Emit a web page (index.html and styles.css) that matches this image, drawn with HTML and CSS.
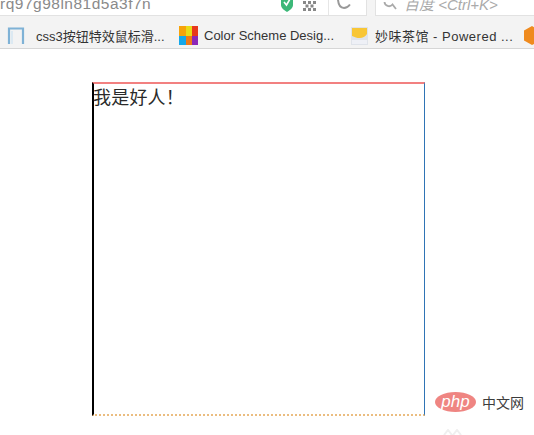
FILE: index.html
```html
<!DOCTYPE html>
<html lang="zh">
<head>
<meta charset="utf-8">
<title>border demo</title>
<link rel="stylesheet" href="styles.css">
</head>
<body>
<header class="toolbar">
  <div class="urlbar">
    <span class="url">rq97g98ln81d5a3f7n</span>
    <svg class="shield" width="14" height="15" viewBox="0 0 14 15"><path d="M1 0h12v7c0 3-3 5-6 7C4 12 1 10 1 7z" fill="#3cb878"/><path d="M4 4l2.500 3L10 1" fill="none" stroke="#fff" stroke-width="1.600"/></svg>
    <svg class="qr" width="14" height="10" viewBox="0 0 14 10"><path d="M0 0h3v3H0zM5 0h3v3H5zM10 0h3v3h-3zM2.500 3.500h3v3h-3zM7.500 3.500h3v3h-3zM0 7h3v3H0zM5 7h3v3H5zM10 7h3v3h-3z" fill="#888"/></svg>
    <span class="sep"></span>
    <svg class="reload" width="15" height="9" viewBox="0 0 15 9"><path d="M14 4.500C12 7 10 8 8 8 5 8 2.500 5 2 0" fill="none" stroke="#999" stroke-width="2"/></svg>
  </div>
  <div class="searchbar">
    <svg class="lens" width="14" height="8" viewBox="0 0 14 8"><path d="M1.500 0a4.500 4.500 0 0 0 8 2.500L13 7" fill="none" stroke="#aaa" stroke-width="1.800"/></svg>
    <span class="hint">百度 &lt;Ctrl+K&gt;</span>
  </div>
</header>
<nav class="bookmarks">
  <a class="mark mark-css">
    <svg width="18" height="17" viewBox="0 0 18 17"><path d="M2 17V1.500h14V17" fill="none" stroke="#7fb2d6" stroke-width="2.200"/><path d="M5 17V4" stroke="#d5e6f2" stroke-width="1.500"/></svg>
    <span>css3按钮特效鼠标滑...</span>
  </a>
  <a class="mark mark-color">
    <svg width="19" height="19" viewBox="0 0 19 19"><rect width="7" height="10" fill="#f7a30a"/><rect x="7" width="6" height="10" fill="#e8dc18"/><rect x="13" width="6" height="10" fill="#e8381c"/><rect y="10" width="7" height="9" fill="#16a8ea"/><rect x="7" y="10" width="6" height="9" fill="#f07a18"/><rect x="13" y="10" width="6" height="9" fill="#8c28b8"/></svg>
    <span>Color Scheme Desig...</span>
  </a>
  <a class="mark mark-tea">
    <svg width="17" height="18" viewBox="0 0 17 18"><rect width="17" height="18" fill="#dfe3ea"/><path d="M1 1h15v6c-3 5-9 5-15 2z" fill="#f8c636"/><path d="M1 13h15v4H1z" fill="#eef0f6"/></svg>
    <span>妙味茶馆 - Powered ...</span>
  </a>
  <svg class="hex" width="16" height="19" viewBox="0 0 16 19"><path d="M8 0l8 4.500v10L8 19l-8-4.500v-10z" fill="#ef8a1e"/></svg>
</nav>
<main class="stage">
  <div class="box"><p class="line">我是好人！</p></div>
</main>
<aside class="watermark">
  <span class="php">php</span>
  <span class="cn">中文网</span>
</aside>
<svg class="ghost" width="20" height="6" viewBox="0 0 20 6"><path d="M1 6l4-5 4 5M10 6l4-5 4 5" fill="none" stroke="#efefef" stroke-width="2"/></svg>
</body>
</html>
```

FILE: styles.css
```css
html, body {
  margin: 0;
  padding: 0;
  background: #fff;
}
body {
  width: 534px;
  height: 435px;
  overflow: hidden;
  position: relative;
  font-family: "Liberation Sans", "Noto Sans CJK SC", sans-serif;
}
.toolbar {
  height: 16px;
  display: flex;
  background: #f4f4f4;
  overflow: hidden;
}
.urlbar {
  width: 367px;
  height: 16px;
  background: #fff;
  display: flex;
  align-items: flex-end;
  border-bottom: 1px solid #e2e2e2;
  border-right: 1px solid #e2e2e2;
  box-sizing: border-box;
}
.url {
  font-size: 15.500px;
  line-height: 15px;
  color: #8a8a8a;
  letter-spacing: 0.5px;
  margin-bottom: 4px;
  flex: 1;
  white-space: nowrap;
}
.shield { margin: 0 9px 2px 0; flex: none; }
.qr { margin: 0 11px 4px 0; flex: none; }
.sep {
  width: 1px;
  height: 15px;
  background: #e6e6e6;
  flex: none;
}
.reload { margin: 0 15px 6px 7px; flex: none; }
.searchbar {
  margin-left: 8px;
  flex: 1;
  height: 16px;
  background: #fff;
  border-bottom: 1px solid #e2e2e2;
  border-left: 1px solid #e2e2e2;
  box-sizing: border-box;
  display: flex;
  align-items: flex-end;
  padding-left: 7px;
}
.lens { margin: 0 7px 5px 0; flex: none; }
.hint {
  font-size: 15px;
  line-height: 14px;
  font-style: italic;
  color: #aaa;
  margin-bottom: 3px;
  white-space: nowrap;
}
.bookmarks {
  height: 33px;
  box-sizing: border-box;
  background: #f3f3f3;
  border-bottom: 1px solid #d6d6d6;
  display: flex;
  align-items: center;
  padding: 7px 0 0 7px;
  overflow: hidden;
}
.mark {
  display: flex;
  align-items: center;
  font-size: 13px;
  color: #333;
  white-space: nowrap;
  flex: none;
}
.mark-css span { margin-left: 11px; }
.mark-css { width: 172px; }
.mark-color span { margin-left: 6px; }
.mark-color { width: 172px; }
.mark-tea span { margin-left: 7px; letter-spacing: 0.5px; }
.mark-tea { width: 173px; }
.hex { flex: none; }
.stage {
  padding: 33px 0 0 92px;
}
.box {
  width: 330px;
  height: 330px;
  border-top: 2px solid #f28080;
  border-right: 1px solid #2f74b5;
  border-bottom: 2px dotted #ebbd80;
  border-left: 2px solid #000;
}
.line {
  margin: 0 0 0 -1px;
  font-size: 18px;
  letter-spacing: 0.2px;
  line-height: 24px;
  color: #2a2a2a;
  font-family: "Noto Sans CJK TC", sans-serif;
}
.watermark {
  position: absolute;
  left: 435px;
  top: 392px;
  display: flex;
  align-items: center;
  gap: 6px;
}
.php {
  width: 41px;
  height: 20px;
  border-radius: 50%;
  background: #ef8582;
  color: #fff;
  font-style: italic;
  font-size: 17px;
  line-height: 19px;
  text-align: center;
  font-family: "Liberation Sans", sans-serif;
}
.cn {
  font-size: 14px;
  color: #3c3c3c;
  font-family: "Noto Sans CJK SC", sans-serif;
}
.ghost {
  position: absolute;
  left: 443px;
  top: 429px;
}
```
